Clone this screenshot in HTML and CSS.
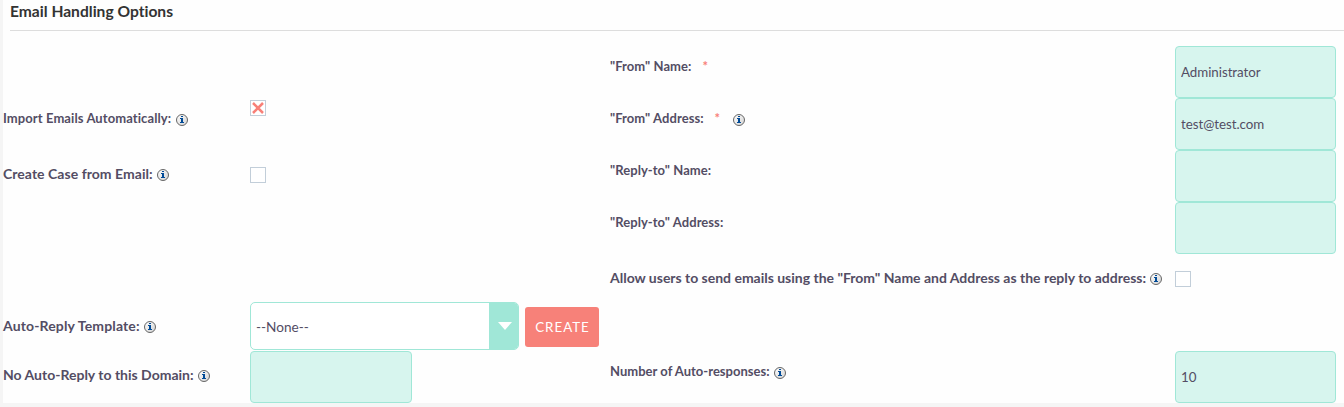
FILE: index.html
```html
<!DOCTYPE html>
<html lang="en">
<head>
<meta charset="utf-8">
<title>Email Handling Options</title>
<link rel="stylesheet" href="styles.css">
</head>
<body>
<svg class="defs" width="0" height="0" aria-hidden="true">
  <defs>
    <linearGradient id="shade" x1="0" y1="0" x2="1" y2="1"><stop offset="0" stop-color="#fff"/><stop offset="1" stop-color="#d2d2d2"/></linearGradient>
    <symbol id="info" viewBox="0 0 12 12">
      <circle cx="6" cy="6" r="5.5" fill="url(#shade)" stroke="#666" stroke-width="1"/>
      <path shape-rendering="crispEdges" fill="#004a96" d="M5 2h2v1H5zM4 4h3v4h1v1H4V8h1V5H4z"/>
    </symbol>
  </defs>
</svg>
<main class="panel">
  <h4 class="title">Email Handling Options</h4>
  <div class="form">
    <div></div><div></div>
    <div class="label"><span>"From" Name:</span><b class="required">*</b></div>
    <input class="text" value="Administrator">

    <div class="label import"><span>Import Emails Automatically:</span><svg class="info"><use href="#info"/></svg></div>
    <div class="check high"><span class="box"><svg viewBox="0 0 14 14"><path d="M2 2l10 10M12 2L2 12"/></svg></span></div>
    <div class="label"><span>"From" Address:</span><b class="required">*</b><svg class="info after"><use href="#info"/></svg></div>
    <input class="text" value="test@test.com">

    <div class="label low wide case"><span>Create Case from Email:</span><svg class="info"><use href="#info"/></svg></div>
    <div class="check mid"><span class="box"></span></div>
    <div class="label"><span>"Reply-to" Name:</span></div>
    <input class="text">

    <div></div><div></div>
    <div class="label"><span>"Reply-to" Address:</span></div>
    <input class="text">

    <div></div><div></div>
    <div class="label low wide allow"><span>Allow users to send emails using the "From" Name and Address as the reply to address:</span><svg class="info"><use href="#info"/></svg></div>
    <div class="check mid"><span class="box"></span></div>

    <div class="label low wide auto"><span>Auto-Reply Template:</span><svg class="info"><use href="#info"/></svg></div>
    <div class="template">
      <div class="select"><span>--None--</span><i class="arrow"><svg viewBox="0 0 14 8"><path d="M0 0h14L7 8z"/></svg></i></div>
      <button class="create">CREATE</button>
    </div>
    <div></div><div></div>

    <div class="label low wide"><span>No Auto-Reply to this Domain:</span><svg class="info"><use href="#info"/></svg></div>
    <input class="text domain">
    <div class="label count"><span>Number of Auto-responses:</span><svg class="info"><use href="#info"/></svg></div>
    <input class="text" value="10">
  </div>
</main>
</body>
</html>
```
FILE: styles.css
```css
* { box-sizing: border-box; }
body { margin: 0; height: 407px; overflow: hidden; background: #f5f5f5; font-family: Lato, sans-serif; font-variant-ligatures: none; color: #534d64; }
.defs { position: absolute; }
.panel { margin-left: 3px; height: 403px; background: #fefefe; }
.title { margin: 0 0 15px 7px; height: 31px; border-bottom: 1px solid #ddd; font-size: 15.6px; line-height: 22px; font-weight: 700; color: #333; }
.form { display: grid; grid-template-columns: 247px 360px 565px 161px; grid-template-rows: 52px 52px 52px 52px 48px 49px 52px; }
.label { display: flex; align-items: flex-start; padding-top: 10px; font-size: 13px; line-height: 20px; font-weight: 700; letter-spacing: .06px; white-space: nowrap; }
.label.low { padding-top: 14px; }
.label.wide { font-size: 14px; letter-spacing: 0; }
.label.import { letter-spacing: .09px; }
.label.case { letter-spacing: .04px; }
.label.allow { letter-spacing: -.013px; }
.label.auto { letter-spacing: .14px; }
.label.count { letter-spacing: .02px; }
.info { width: 12px; height: 12px; margin: 6px 0 0 4px; flex: none; }
.label.low .info { margin-top: 5px; }
.label.import .info { margin-left: 5px; }
.label .info.after { margin-left: 13px; }
.required { margin-left: 11px; color: #f88078; font-weight: 700; }
.text { width: 161px; height: 52px; margin: 0; padding: 0 5px 1px; border: 1px solid #a0e7d7; border-radius: 4px; background: #d7f5ee; font: 13.33px Lato, sans-serif; font-variant-ligatures: none; letter-spacing: -.04px; color: #534d64; }
.domain { width: 162px; }
.high { padding-top: 2px; }
.mid { padding-top: 17px; }
.box { display: flex; width: 16px; height: 16px; border: 1px solid #c2ced9; background: #fff; }
.box svg { width: 14px; height: 14px; fill: none; stroke: #f88078; stroke-width: 2.5; }
.template { display: flex; align-items: flex-start; gap: 6px; }
.select { display: flex; justify-content: space-between; align-items: center; width: 269px; height: 48px; padding-left: 5px; overflow: hidden; border: 1px solid #a0e7d7; border-radius: 5px; background: #fff; font-size: 13.6px; }
.select span { padding-top: 2px; }
.arrow { display: flex; justify-content: center; align-items: center; width: 29px; height: 48px; background: #a0e7d7; }
.arrow svg { width: 14px; height: 8px; margin-left: 2px; fill: #fff; }
.create { width: 74px; height: 40px; margin-top: 5px; padding: 0 0 1px 1px; border: 0; border-radius: 3px; background: #f78179; font: 13.33px Lato, sans-serif; letter-spacing: 1px; color: #fff; }
```
